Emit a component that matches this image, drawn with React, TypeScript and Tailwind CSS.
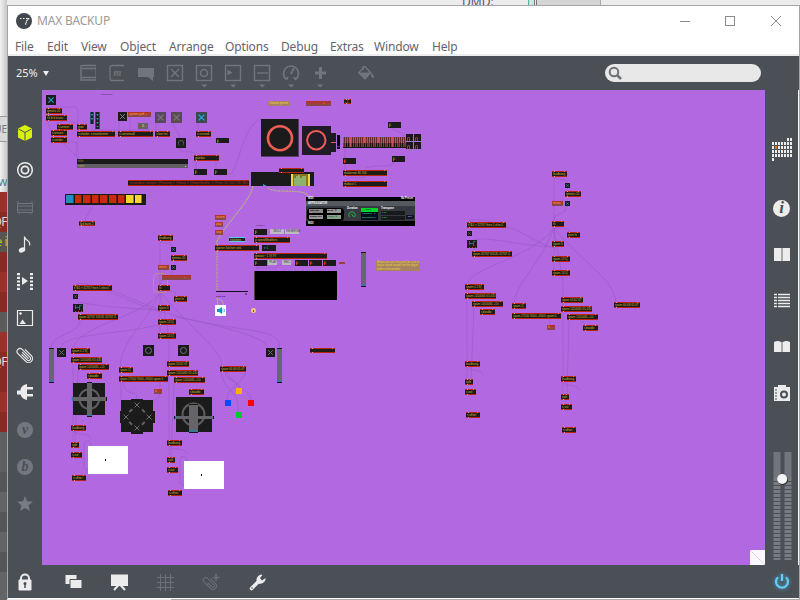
import React from "react";

type Kind = "obj" | "num" | "msg" | "red" | "cyan" | "note" | "bluenum";
type Item = [number, number, number, string, Kind?, number?];

const KIND: Record<Kind, string> = {
  obj: "bg-[#1c1c18] border-y border-[#bd230f] text-[#c9ac38]",
  num: "bg-[#1b1b1b] text-[#c9a838] pl-[4px] leading-[6px]",
  bluenum: "bg-[#1b1b1b] text-[#30a8cf] leading-[6px]",
  msg: "bg-[#bdb9c0] text-[#44404a] text-center leading-[5px]",
  red: "bg-linear-to-b from-[#bd2b18] to-[#7e4b50] text-[#f0a840] leading-[5px]",
  cyan: "bg-[#1b2420] border-y border-[#5cc8f0] text-[#c8c850] leading-[3px]",
  note: "bg-[#a5835f] text-[#f0d23c] leading-[5px]",
};

const ITEMS: Item[] = [
  [46, 108, 16, "qmetro 20"], [46, 115, 21, "t b b b erase"], [57, 124, 16, "r.context"],
  [51, 130, 16, "s.texture"], [51, 137, 16, "s.render"], [77, 124, 10, "gate"],
  [77, 131, 38, "s.shader  s.transformer"], [118, 131, 35, "s cornerwall"], [155, 131, 15, "s low trw"],
  [196, 131, 15, "s unused"], [194, 155, 25, "gatebar"],
  [128, 112, 23, "system grid  ▪", "red", 5], [216, 138, 13, "0.", "num", 5],
  [194, 169, 13, "0.", "num"], [214, 169, 13, "0.", "num"],
  [79, 221, 16, "led.bank 2", "obj", 5],
  [215, 215, 11, "record", "red", 5], [215, 222, 8, "play", "red", 5], [215, 230, 8, "stop", "red", 5],
  [268, 101, 22, "Choose preset", "note", 5], [306, 101, 25, "                     ▪", "red", 5], [344, 99, 7, "▪ 1", "obj", 5],
  [388, 122, 13, "0.", "num"], [392, 156, 13, "0.", "num"], [343, 158, 13, "0.", "num"],
  [343, 170, 44, "makenote 80 300"], [343, 181, 44, "midiout 1"], [279, 168, 25, "", "obj", 5],
  [254, 229, 13, "0.", "num"], [270, 229, 14, "MULT", "msg", 5], [285, 229, 14, "REVERSE", "msg", 5],
  [254, 237, 36, "p.speedModifiers"], [229, 237, 16, "r.kitchen", "cyan", 5], [215, 245, 44, "opener kitchen sink"],
  [262, 245, 14, " ▾ 1.", "bluenum"], [254, 253, 73, "groove~ 1 @ 97"],
  [254, 260, 13, "0.", "num"], [268, 260, 9, "PLAY", "msg", 5], [282, 260, 9, "REC", "msg", 5],
  [295, 260, 13, "0.", "num"], [309, 260, 13, "0.", "num"], [323, 260, 13, "0.", "num"], [339, 262, 6, "", "red", 2],
  [310, 348, 25, "", "obj", 5],
  [162, 275, 29, "                           –", "red", 5],
  [167, 361, 22, "spam 53 62 67"], [220, 366, 26, "spam 66 68 65 67"], [154, 389, 8, "0", "red", 5],
  [189, 389, 15, "r.doodle"],
  [614, 302, 26, "spam 66 68 65 67"], [547, 325, 8, "0", "red", 5], [583, 325, 15, "r.doodle"],
  [561, 297, 22, "spam 53 62 67"],
  ...tree(158, 235, 0), ...tree(552, 171, 1),
  ...outs(71, 425, 0), ...outs(167, 440, 0), ...outs(465, 361, 1), ...outs(561, 376, 1),
  [73, 285, 39, "if $i1 > 32767 then 1 else 0"], [78, 314, 40, "spam 32767 65535 32767 0"],
  [71, 348, 19, "spam 0 2 8|"], [71, 357, 31, "spam 1410065 65 430"], [78, 364, 31, "spam 1410065 +10"], [87, 373, 15, "r.doodle"],
  [119, 367, 14, "spam 2|"], [119, 376, 49, "spam 27000 9000 +9000 spam 0"],
  [167, 370, 31, "spam 1410065 65 430"], [174, 377, 31, "spam 1410065 +10"],
  [467, 222, 39, "if $i1 > 32767 then 1 else 0"], [472, 251, 40, "spam 32767 65535 32767 0"],
  [465, 284, 19, "spam 0 2 8|"], [465, 293, 31, "spam 1410065 65 430"], [472, 301, 31, "spam 1410065 +10"], [480, 309, 15, "r.doodle"],
  [512, 303, 14, "spam 2|"], [512, 313, 49, "spam 27000 9000 +9000 spam 0"],
  [561, 306, 31, "spam 1410065 65 430"], [567, 314, 31, "spam 1410065 +10"],
];

function tree(x: number, y: number, k: number): Item[] {
  return [
    [x, y, 15, "loadbang"], [x + 13, y + 20, 16, "qmetro 20"], [x, y + 30, 11, "menu", "red", 5],
    [x, y + 50, 12, "hi"], [x + (k ? 15 : 16), y + 61, 13, "print hi"], [x, y + 70, 12, "spam 0"],
    [x, y + 84 + k, 18, "spam 13 5|"], [x, y + 98 + k, 18, "spam 14 5|"],
  ];
}
function outs(x: number, y: number, k: number): Item[] {
  return [
    [x, y, 15, "loadbang"], [x, y + 17 + k, 8, "split"], [x, y + 27 + k, 11, "s out"], [x + 1, y + 50 + k, 14, "s offset"],
  ];
}

function Node({ it }: { it: Item }) {
  const [x, y, w, label, kind = "obj", h = 6] = it;
  return (
    <div
      className={"absolute whitespace-pre pl-px font-['Liberation_Sans',sans-serif] text-[3.1px] leading-[4px] tracking-[-0.08px] " + KIND[kind]}
      style={{ left: x - 42, top: y - 90, width: w, height: h }}
    >
      {kind === "num" && <i className="absolute left-px top-[2px] h-[3px] w-px bg-[#e03a18]" />}
      {label}
      {kind === "obj" && (
        <>
          <i className="absolute -top-px left-[2px] h-px w-px bg-[#b9a8a8]" />
          <i className="absolute -bottom-px left-[2px] h-px w-px bg-[#b9a8a8]" />
          <i className="absolute -top-px right-[2px] h-px w-px bg-[#b98a7a]" />
        </>
      )}
    </div>
  );
}

function At({ x, y, w, h, c = "", children }: { x: number; y: number; w: number; h: number; c?: string; children?: React.ReactNode }) {
  return (
    <div className={"absolute " + c} style={{ left: x - 42, top: y - 90, width: w, height: h }}>
      {children}
    </div>
  );
}

function Toggle({ x, y, s, fg = "#6e6e72", bg = "#1b1b1b" }: { x: number; y: number; s: number; fg?: string; bg?: string }) {
  return (
    <svg className="absolute" style={{ left: x - 42, top: y - 90 }} width={s} height={s} viewBox="0 0 10 10">
      <rect width="10" height="10" fill={bg} />
      <path d="M2.4 2.4 7.6 7.6M7.6 2.4 2.4 7.6" stroke={fg} strokeWidth="1.1" />
    </svg>
  );
}

const CORDS = [
  "M49 107H74Q78 107 78 112V160", "M48 121C48 131 60 138 78 158", "M56 123C66 121 70 120 78 124",
  "M66 142H76V156", "M119 121V131M130 117V131M92 124V130H150M156 123V131M198 123V131",
  "M173 122C174 132 179 131 180 138M179 148C179 155 196 149 196 155M196 161V169M216 161V169M229 175C241 168 240 128 261 119",
  "M93 205C91 213 86 214 85 221", "M391 128C397 133 404 130 404 138M345 148V170M394 162C394 169 366 163 365 170M365 176C365 180 347 175 345 181",
  "M160 241V333M160 241C163 245 172 242 173 247M173 252V256M173 270C171 283 160 276 160 285M160 291H171Q176 291 176 296",
  "M160 291C153 314 76 325 73 349M160 291C150 321 122 337 120 367M160 291C166 325 170 329 169 361M160 291C188 327 222 349 222 366",
  "M75 285C86 277 126 302 158 311C190 320 208 324 250 330C276 334 280 339 279 348",
  "M78 302C91 305 119 308 158 310", "M80 320C81 334 51 333 51 349M158 325C112 336 62 333 60 349",
  "M176 317C222 326 266 337 268 348M100 285C137 302 151 306 160 310",
  "M73 354V442M78 370L75 442M121 373V399M169 367V455M174 383L171 457M123 382C126 400 137 386 137 400M160 382V389M160 394C159 402 151 398 150 404",
  "M221 372C225 394 240 389 238 412M225 372C226 382 238 378 239 388M246 372C236 391 228 386 227 400M226 372C240 392 250 389 251 400",
  "M73 431C78 436 90 432 91 439M73 458H81Q84 458 84 452V445Q84 441 88 441Q91 442 91 446M84 457V466Q84 470 91 471",
  "M169 446C174 451 186 447 187 454M169 473H177Q180 473 180 467V460Q180 456 184 456Q187 457 187 461M180 472V481Q180 485 187 486",
  "M554 177V275M554 177C560 181 567 178 567 183M567 188V191M567 206C566 216 554 211 554 221M554 228H564Q569 228 569 232",
  "M554 228C533 257 472 267 467 284M554 228C540 265 517 281 514 303M554 228C559 270 564 270 563 297M554 228C578 259 614 278 616 302",
  "M469 222C470 215 505 224 526 235C540 243 548 247 554 247M474 240C488 236 520 246 554 247",
  "M467 290V379M474 307L471 379M563 303V394M569 320L567 394M550 319V325M580 319C582 324 584 320 585 325",
  "M467 367C472 373 482 368 483 375M563 382C568 388 578 383 579 390",
  "M257 265V270M257 268H276Q277 266 277 265M297 265H277M217 252V292",
];

function Mini({ w, t, c }: { w: string; t: string; c: string }) {
  return <div className={"h-[4px] whitespace-pre pl-px text-[2.5px] leading-[4px] " + w + " " + c}>{t}</div>;
}

function Arpeggiator() {
  return (
    <div className="flex h-full flex-col font-['Liberation_Sans',sans-serif] text-[2.6px] font-bold text-white">
      <div className="flex h-[4px] justify-between px-[2px] leading-[4px]"><span>MIDI</span><span>No Preset</span></div>
      <div className="h-[5px] bg-[#555960] pl-[2px] leading-[5px]">ARPEGGIATOR</div>
      <div className="flex h-[15px] bg-[#363940] pl-px">
        <div className="mt-[2px] grid h-[13px] w-[37px] grid-cols-2 content-start gap-[2px] rounded bg-black px-[2px] pt-px">
          <Mini w="w-[14px]" t="Interval" c="bg-[#888] text-black" />
          <Mini w="w-[14px]" t="BPM   ▾" c="bg-[#999] text-black" />
          <Mini w="w-[14px]" t="Range off" c="bg-[#999] text-black" />
          <Mini w="w-[14px]" t="Latch  ●" c="bg-[#8aa28a] text-[#063]" />
        </div>
        <div className="ml-[3px] w-[13px] pt-px">
          <div className="leading-[3px]">Duration</div>
          <svg width="10" height="8" fill="none"><path d="M2.500 7a3.200 3.200 0 1 1 5 0M4.500 4l2 3" stroke="#27b14a" /></svg>
        </div>
        <div className="ml-px flex flex-col pt-[2px]">
          <Mini w="w-[17px]" t="     Style" c="bg-[#00d32c] text-[#064d15]" />
          <Mini w="w-[17px]" t="Forward   0" c="bg-[#060b21] text-[#25c544]" />
          <Mini w="w-[17px]" t="Backward 0" c="bg-[#060b21] text-[#25c544]" />
        </div>
        <div className="ml-[3px] flex flex-col gap-px pt-px">
          <div className="leading-[3px]">Transpose</div>
          <Mini w="w-[24px]" t="0 st" c="bg-[#17191d] text-[#25c544]" />
          <Mini w="w-[24px]" t="0.00" c="bg-[#17191d] text-[#25c544]" />
        </div>
        <div className="ml-px flex items-end pb-[2px]"><Mini w="w-[8px]" t=" Set" c="bg-[#101328] text-[#aaa]" /></div>
      </div>
      <div className="pl-[2px] leading-[5px]">MIDI</div>
    </div>
  );
}

function Patcher() {
  const cells = ["#2090bd", "#c82b0c", "#c82b0c", "#c82b0c", "#c82b0c", "#c82b0c", "#c82b0c", "#f4d432", "#f4d432"];
  return (
    <main className="relative h-[475px] w-[723px] shrink-0 overflow-hidden bg-[#b168e1]">
      <svg className="absolute left-0 top-0" width="723" height="475" viewBox="42 90 723 475" fill="none">
        <g stroke="#9454c0" strokeOpacity=".6" strokeWidth=".8">
          {CORDS.map((d) => <path key={d} d={d} />)}
        </g>
        <rect x="153.5" y="273.5" width="14" height="19" rx="4" stroke="#bb8e93" />
      </svg>
      <At x={101} y={93} w={14} h={4} c="whitespace-nowrap text-[2px] leading-[4px] text-[#4c2868]">select mode</At>
      <At x={256} y={223} w={12} h={4} c="whitespace-nowrap text-[2.5px] leading-[4px] text-[#4c2868]">speed x</At>
      <At x={216} y={294} w={12} h={4} c="whitespace-nowrap text-[2.5px] leading-[4px] text-[#28163c]">0.00 dB</At>
      <Toggle x={46} y={95} s={10} fg="#2ba3cc" />
      <At x={90} y={112} w={4} h={12} c="bg-[#1b2024] border-x border-[#285566]" />
      <At x={95} y={112} w={5} h={17} c="bg-[#1b2024] border-x border-[#285566]" />
      <svg className="absolute left-[48px] top-[22px]" width="10" height="17">
        <path d="M2 2v8M7.5 2v13" stroke="#2ba3cc" strokeWidth="1.5" strokeDasharray="1.5 2.5" />
      </svg>
      <Toggle x={118} y={112} s={9} fg="#85858a" />
      <Toggle x={155} y={112} s={11} fg="#7d797f" bg="#58485f" />
      <Toggle x={171} y={112} s={11} fg="#7d797f" bg="#594b4e" />
      <Toggle x={196} y={112} s={11} fg="#22aee0" bg="#3d494c" />
      <At x={138} y={123} w={10} h={6} c="flex items-center gap-px bg-[#67616a] pl-[2px] text-[3.5px] leading-[6px] text-[#ddd]"><i className="h-[2px] w-px bg-[#c03020]" />0.</At>
      <At x={176} y={138} w={10} h={10} c="flex items-center justify-center bg-[#1b1b1b]"><i className="size-[6px] rounded-full border border-b-0 border-[#55555a]" /></At>
      <At x={77} y={159} w={111} h={5} c="bg-[#1b1b1b] pl-px text-[3px] leading-[5px] text-[#a89040]">title</At>
      <At x={77} y={164} w={111} h={4} c="flex items-center justify-between bg-[#625e64] pl-px pr-[2px] text-[3px] leading-[4px] text-[#c0a850]">start<i className="size-[1px] bg-[#ccc]" /></At>
      <At x={128} y={180} w={121} h={6} c="border-y border-[#bd230f] bg-[#1c1c18] whitespace-nowrap pl-[2px] font-['Liberation_Sans',sans-serif] text-[3.4px] leading-[4px] text-[#b52a18]">jit.window sample @floating 1 @drop 1 @depthbuffer 1 @rect 50 100 720 880</At>
      <At x={65} y={194} w={81} h={11} c="flex gap-[1px] bg-[#1b1b1b] py-[1px] pl-px">
        {cells.map((c, i) => <i key={i} className="h-[8px] w-[7.6px] border-r border-black/40" style={{ backgroundColor: c }} />)}
      </At>

      <At x={261} y={119} w={38} h={38} c="border-b border-r border-[#5c3970] bg-[#1b1b1b]" />
      <At x={302} y={126} w={29} h={29} c="bg-[#201b26]" />
      <At x={331} y={133} w={5} h={19} c="bg-[#1c1a22] pt-[9px]"><div className="h-px bg-[#ed5d56]" /></At>
      <At x={337} y={135} w={3} h={14} c="bg-black pt-[11px]"><div className="h-px bg-[#6b3375]" /></At>
      <svg className="absolute left-[219px] top-[29px]" width="75" height="40" viewBox="261 119 75 40" fill="none" stroke="#ee5e57">
        <circle cx="280" cy="138.2" r="12" strokeWidth="2.6" /><circle cx="316.3" cy="140.3" r="9.2" strokeWidth="2" />
      </svg>
      <At x={343} y={137} w={63} h={11} c="bg-[#211216]">
        <svg width="63" height="11">
          {Array.from({ length: 32 }, (_, i) => <g key={i}><rect x={i * 2} width={i % 7 === 3 ? 2 : 1.4} height={i % 3 ? 6 : 10} fill="#cc4f53" /><rect x={i * 2} y="6" width="1" height="4" fill="#85383e" /></g>)}
        </svg>
      </At>
      {[[406, 134], [414, 134], [406, 142], [414, 142]].map(([x, y]) => (
        <At key={x + "-" + y} x={x} y={y} w={7} h={7} c="bg-[#1d171c] pl-px pt-[3px]"><div className="h-[4px] w-[3px] rounded-t border border-b-0 border-[#9c3c3e]" /></At>
      ))}

      <At x={251} y={172} w={63} h={14} c="bg-[#1b1b1b]">
        <svg width="63" height="14">
          <rect x="40" y="2" width="19" height="12" fill="#8b7420" />
          <path d="M41 2v12M58 2v12" stroke="#f2d53a" strokeWidth="2" />
          <path d="M43 14V6h2V4h2V3h2v3h2V4h4v10z" fill="#8db36e" />
          <path d="M12 14v-2l2 1 2 1z" fill="#2ba3cc" />
        </svg>
      </At>
      <svg className="absolute left-[172px] top-[90px]" width="140" height="130" viewBox="214 180 140 130" fill="none" stroke="#b6b184" strokeWidth="1.2" strokeDasharray="2 .7">
        <path d="M253 186C250 202 227 222 217 241V292M268 188C274 194 306 188 308 196M217 298L218 305M218 299Q224 300 223 305" />
      </svg>

      <At x={306} y={197} w={109} h={29} c="bg-black"><Arpeggiator /></At>

      <At x={254} y={271} w={83} h={29} c="border-l border-[#444] bg-black" />
      {[[361, 252], [277, 348], [49, 348]].map(([x, y]) => (
        <At key={x} x={x} y={y} w={5} h={35} c="flex items-end border-y border-[#151515] bg-[#6a656c]"><i className="h-[2px] w-[5px] bg-[#347b94]" /></At>
      ))}
      <At x={376} y={261} w={43} h={10} c="bg-[#a5835f] pl-px font-['Liberation_Sans',sans-serif] text-[2.6px] leading-[3.300px] text-[#f0d23c]">Before you start the patch be sure to load a sound sample into the player buffer in the window</At>
      <At x={216} y={291} w={32} h={1} c="bg-[#160920]" /><At x={245} y={293} w={2} h={2} c="bg-[#72428c]" />
      <At x={215} y={305} w={11} h={11} c="bg-white">
        <svg width="11" height="11"><path d="M2 4h2l3-2v7L4 7H2z" fill="#1b91b9" /><path d="M8 3.5v4M9.5 4v3" stroke="#4cb5d5" strokeWidth=".8" /></svg>
      </At>
      <At x={251} y={308} w={5} h={5} c="flex items-center justify-center rounded-full bg-[#f7c77b]"><i className="h-[2px] w-px bg-[#8b4800]" /></At>
      <Toggle x={266} y={348} s={9} /><Toggle x={57} y={348} s={9} />
      <Toggle x={73} y={294} s={5} /><Toggle x={467} y={231} s={5} />
      {[[171, 247], [171, 265], [565, 183], [565, 201]].map(([x, y]) => <Toggle key={x + "-" + y} x={x} y={y} s={5} fg="#2ba3cc" />)}
      {[[73, 304], [467, 240]].map(([x, y]) => (
        <At key={x} x={x} y={y} w={10} h={8} c="bg-[#20191e]"><svg width="10" height="8"><path d="M2.500 1v4M2.500 3.500h4M6.500 6V1.500h2" stroke="#287f9d" strokeWidth=".8" fill="none" /><path d="M2 7.500h1M5 7.500h1M8 7.500h1" stroke="#c33" /></svg></At>
      ))}
      {[143, 178].map((x) => <At key={x} x={x} y={345} w={11} h={11} c="flex items-center justify-center bg-[#1b1b1b]"><i className="size-[7px] rounded-full border border-[#737378]" /></At>)}

      {ITEMS.map((it, i) => <Node key={i} it={it} />)}

      <svg className="absolute left-[28px] top-[291px]" width="148" height="56" viewBox="70 381 148 56">
        <rect x="73" y="383" width="32" height="32" fill="#1b1b1b" />
        <circle cx="89.3" cy="399" r="9.8" fill="none" stroke="#5d5d61" strokeWidth="2" />
        <rect x="87" y="383" width="5" height="33" fill="#656569" /><rect x="72" y="397" width="34" height="4" fill="#656569" />
        <path d="M87 382.5h5M87 416.5h5M106.5 397v4" stroke="#151515" /><path d="M87 415h5M72.5 397v4" stroke="#347b94" strokeWidth="1.5" />
        <path d="M121 400h10v-1h12v1h10v11h2v12h-2v9h-10v2h-12v-2h-10v-9h-1v-12h1z" fill="#1b1b1b" />
        <circle cx="137" cy="417" r="9" fill="none" stroke="#626266" strokeWidth="2" strokeDasharray="4 10.14" strokeDashoffset="-5" />
        {[[137, 405], [137, 428], [126, 417], [149, 417]].map(([x, y]) => <path key={x + "-" + y} d={`M${x - 2.5} ${y - 2.5}l5 5m0-5l-5 5`} stroke="#6b6b6f" />)}
        <rect x="176" y="397" width="36" height="35" fill="#1b1b1b" />
        <circle cx="193.5" cy="414.5" r="11" fill="none" stroke="#5d5d61" strokeWidth="2" />
        <rect x="189" y="405" width="9" height="27" fill="#656569" /><rect x="174" y="416" width="40" height="3" fill="#656569" />
        <path d="M189 404.5h9M189 432.5h9M174.500 416v3M213.500 416v3" stroke="#151515" /><path d="M189 431h9M176 416v3" stroke="#347b94" strokeWidth="2" />
      </svg>
      <At x={88} y={446} w={40} h={28} c="bg-white pl-[17px] pt-[13px]"><div className="h-[2px] w-px bg-black" /></At>
      <At x={184} y={461} w={40} h={28} c="bg-white pl-[17px] pt-[13px]"><div className="h-[2px] w-px bg-black" /></At>
      <At x={236} y={388} w={6} h={6} c="bg-[#ffb000]" /><At x={225} y={400} w={6} h={6} c="bg-[#004dff]" />
      <At x={248} y={400} w={6} h={6} c="bg-[#ff0000]" /><At x={236} y={412} w={6} h={6} c="bg-[#00c833]" />
      <svg className="absolute bottom-0 right-0" width="15" height="15"><rect width="15" height="15" fill="#faf8fc" /><path d="M0 0 15 15" stroke="#d5b2e8" strokeDasharray="1.5 1" /></svg>
    </main>
  );
}

const MENUS: [string, string][] = [
  ["File", "w-[32px]"], ["Edit", "w-[34px]"], ["View", "w-[39px]"], ["Object", "w-[49px]"], ["Arrange", "w-[56px]"],
  ["Options", "w-[56px]"], ["Debug", "w-[49px]"], ["Extras", "w-[44px]"], ["Window", "w-[58px]"], ["Help", "w-[30px]"],
];

function Svg({ w = 18, h = 18, c = "", children }: { w?: number; h?: number; c?: string; children: React.ReactNode }) {
  return <svg width={w} height={h} viewBox={`0 0 ${w} ${h}`} className={"shrink-0 " + c} fill="none" stroke="currentColor">{children}</svg>;
}

function ToolIcons() {
  const arrow = <path d="M6 20.500h6.500l-3.250 3z" fill="currentColor" stroke="none" />;
  return (
    <div className="-ml-px flex gap-[11px] pt-[8px] text-[#71757d]">
      <Svg h={24}><path d="M2 1v16M3 1.500h14M3 4.500h14M3 13.500h14M3 16h14" strokeWidth="1.5" /><path d="M16.500 1v16" strokeOpacity=".55" /></Svg>
      <Svg h={24}><path d="M16 1.500H4Q2 1.500 2 4v10q0 2.500 2 2.500h12" strokeWidth="1.300" /><text x="5.500" y="12" fontSize="10" fontStyle="italic" fontWeight="bold" fontFamily="Liberation Serif" fill="currentColor" stroke="none">m</text></Svg>
      <Svg h={24}><path d="M1 4h16v9h-1v4l-5-4H1z" fill="currentColor" stroke="none" /></Svg>
      <Svg h={24}><rect x="1.500" y="1.500" width="15" height="15" strokeWidth="1.4" /><path d="m5 5 8 8m0-8-8 8" strokeWidth="1.4" /></Svg>
      <Svg h={24}><rect x="1.500" y="1.500" width="15" height="15" strokeWidth="1.4" /><circle cx="9" cy="9" r="3.500" strokeWidth="1.5" />{arrow}</Svg>
      <Svg h={24}><rect x="1.500" y="1.500" width="15" height="15" strokeWidth="1.4" /><path d="m3.500 5.500 5 3-5 3z" fill="currentColor" stroke="none" />{arrow}</Svg>
      <Svg h={24}><rect x="1.500" y="1.500" width="15" height="15" strokeWidth="1.4" /><path d="M4 9h11" strokeWidth="1.3" />{arrow}</Svg>
      <Svg h={24}><path d="M4.500 15.500A7.500 7.500 0 1 1 13.500 15.500L12 13M4.500 15.500L6 13" strokeWidth="1.700" /><path d="m9 10 3-6" strokeWidth="1.800" />{arrow}</Svg>
      <Svg h={24}><path d="M9.500 3v12M4 9h11" strokeWidth="3" />{arrow}</Svg>
      <Svg h={24} c="ml-[17px]"><path d="M1.500 9h12l-5.500 6.500z" fill="currentColor" /><path d="M1.500 9 8 2.500 14 9M6 6V2" strokeWidth="1.400" /><path d="M14.500 9q3.500 3.500 1.500 5-2-1-1.500-5" fill="currentColor" strokeWidth=".5" /></Svg>
    </div>
  );
}

function LeftBar() {
  return (
    <aside className="flex w-[34px] shrink-0 flex-col items-center gap-[19px] bg-[#4b4f56] pt-[34px] text-[#ececec]">
      <Svg><path d="m9 1 7 3.500v9L9 17l-7-3.500v-9z" fill="#d9f20a" stroke="none" /><path d="m2.500 5 6.500 3.500L15.500 5M9 8.500V17" stroke="#4b4f56" /></Svg>
      <Svg><circle cx="9" cy="9" r="7.300" strokeWidth="1.500" /><circle cx="9" cy="9" r="3.600" strokeWidth="1.800" /></Svg>
      <Svg c="text-[#71757d]"><path d="M1.500 5.500h15v9h-15zM1 4h2M15 4h2M1 8h16M1 12h16M3 16h1M14 16h1" /></Svg>
      <Svg><ellipse cx="6" cy="15" rx="3.300" ry="2.400" transform="rotate(-20 6 15)" fill="currentColor" stroke="none" /><path d="M8.500 14.500V1.500c0 4 7 4 5 9" strokeWidth="1.200" /></Svg>
      <Svg><path d="M2.500 1v17M15.500 1v17" strokeWidth="3" strokeDasharray="2.200 1.500" /><path d="m6 5 6 4-6 4z" fill="currentColor" stroke="none" /></Svg>
      <Svg><path d="M1.500 1.500h15v15h-15z" strokeWidth="1.200" /><path d="m3.500 15 3-4.500 3.500 4.500z" fill="currentColor" stroke="none" /><circle cx="4.500" cy="4.500" r="1.300" fill="currentColor" stroke="none" /></Svg>
      <Svg><g transform="rotate(-45 9 9)"><path d="M7 6v8a2 2 0 0 0 4 0V3a3 3 0 0 0-6 0v11a4 4 0 0 0 8 0V5M9 5v9" strokeWidth="1.150" /></g></Svg>
      <Svg><path d="M1 7.500h3.500V6Q6 2 11 1v16Q6 16 4.500 11.500H1zM11 4h6v2.500h-6zM11 11h6v2.500h-6z" fill="currentColor" stroke="none" /></Svg>
      {["v", "b"].map((s) => <div key={s} className="flex h-[18px] w-[17px] items-end justify-center"><div className="size-[16px] rounded-full bg-[#73777f] text-center font-['Liberation_Serif',serif] text-[14px] font-bold italic leading-[15px] text-[#4b4f56]">{s}</div></div>)}
      <Svg c="text-[#787c83]"><path d="m9 2 2 5.300 6 .4-4.500 3.500L14 17l-5-3.100L4 17l1.500-5.800L1 7.700l6-.4z" fill="currentColor" stroke="none" /></Svg>
    </aside>
  );
}

function RightBar() {
  return (
    <aside className="flex w-[33px] shrink-0 flex-col items-center bg-[#4b4f56] pt-[47px] text-[#ececec]">
      <Svg w={22} h={24}>
        {Array.from({ length: 7 }, (_, c) => [0, 1, 2, 3, 4, 5].map((r) => {
          if ((r === 0 && c < 5) || (r === 5 && c > 0)) return null;
          return <rect key={c + "-" + r} x={1 + c * 3} y={1 + r * 4} width="2" height="3" fill={c === 1 && r === 2 ? "#e47916" : "#ececec"} stroke="none" />;
        }))}
      </Svg>
      <div className="mt-[39px] size-[17px] rounded-full bg-[#ececec] text-center font-['Liberation_Serif',serif] text-[17px] font-bold italic leading-[16px] text-[#4b4f56]">i</div>
      <Svg h={14} c="mt-[30px]"><path d="M1 1h7v13H1zM10 1h7v13h-7z" fill="currentColor" stroke="none" /><path d="M9 1v13" stroke="#aaa" strokeWidth="2" /></Svg>
      <Svg h={16} c="mt-[32px]"><path d="M1 1.500h16M1 4.500h16M1 7.500h16M1 10.500h16M1 13.500h16" strokeWidth="1.600" /><path d="M4.500 0v16" stroke="#4b4f56" /></Svg>
      <Svg h={13} c="mt-[31px]"><path d="M1 2q4-2 7 0v10H1zM10 2q3-2 7 0v10h-7z" fill="currentColor" stroke="none" /><path d="M9 2v10" stroke="#aaa" strokeWidth="2" /></Svg>
      <Svg h={18} c="mt-[31px]"><path d="M5 1h8v2h4v14H1V3h4z" fill="currentColor" stroke="none" /><circle cx="11" cy="10.500" r="3" stroke="#4b4f56" strokeWidth="2" /><path d="M2 6h2M2 9h2M2 12h2M2 15h2" stroke="#4b4f56" /></Svg>
      <Svg w={20} h={110} c="mt-[49px]">
        <path d="M1.500 1h7v26h-7zM12.500 1h7v26h-7z" fill="#71757c" stroke="none" />
        <path d="M5 27v82M16 27v82" stroke="#777b82" strokeWidth="7" strokeDasharray="3 1" />
        <circle cx="11" cy="29" r="5" fill="#292c31" stroke="none" /><circle cx="10.200" cy="28" r="5" fill="#f4f4f4" stroke="none" />
      </Svg>
    </aside>
  );
}

function BottomBar() {
  return (
    <footer className="flex h-[33px] items-center gap-[28px] bg-[#4b4f56] pl-[8px] text-[#ececec]">
      <Svg><path d="M3 7h12v10H3z" fill="currentColor" /><path d="M5 8V5.500a4 4 0 0 1 8 0V8" strokeWidth="2" /><circle cx="9" cy="10.500" r="1.500" fill="#4b4f56" stroke="none" /><path d="M9 11v4" stroke="#4b4f56" strokeWidth="1.500" /></Svg>
      <Svg w={20}><path d="M3.500 2h11v9h-11z" fill="currentColor" stroke="none" /><path d="M8 6.500h12v9H8z" fill="currentColor" stroke="#4b4f56" /></Svg>
      <Svg><path d="M1 1.500h17V13H1z" fill="currentColor" stroke="none" /><path d="m9.500 11-5.500 6M9.500 11l5.500 6" strokeWidth="2" /></Svg>
      <Svg c="text-[#6c7077]"><path d="M4.500 1v17M9.500 1v17M14.500 1v17M1 4.500h17M1 9.500h17M1 14.500h17" /></Svg>
      <Svg c="text-[#6c7077]"><g transform="translate(1) rotate(-45 7 10)"><path d="M5.500 8v6a1.500 1.500 0 0 0 3 0V5a2.500 2.500 0 0 0-5 0v9a3.500 3.500 0 0 0 7 0V7" /></g><path d="M14 1v7M10.500 4.500h7" strokeWidth="1.500" /></Svg>
      <Svg><path d="m3.500 15.500 7-7" strokeWidth="3.600" strokeLinecap="round" /><path d="M8.500 8Q8 3 13 1.500l1.500.5-2.500 3 2 2.500 3.500-2.500Q18 10 11.500 11z" fill="currentColor" stroke="none" /><circle cx="4" cy="15" r=".8" fill="#4b4f56" stroke="none" /></Svg>
      <Svg w={22} h={22} c="ml-auto mr-[6px] text-[#66ccf4] drop-shadow-[0_0_2px_#45a6cf]"><path d="M7 6.200a6 6 0 1 0 8 0M11 3v7" strokeWidth="2.200" /></Svg>
    </footer>
  );
}

const ROWS: [string, string, string?][] = [
  ["h-[20px]", "bg-[#9c302b]"], ["h-[20px]", "bg-[#8b2925] text-[#ddd]", "QF"], ["h-[20px]", "bg-[#575655] text-[#d4b927]", "e i"],
  ["h-[20px]", "bg-[#8b2925]"], ["h-[20px]", "bg-[#9c302b]"], ["h-[20px]", "bg-[#8b2925]"], ["h-[20px]", "bg-[#5b5b5b]"],
  ["h-[20px]", "bg-[#9c302b]"], ["h-[20px]", "bg-[#8b2925] text-[#ddd]", "QF"], ["h-[20px]", "bg-[#8b2925]"], ["h-[20px]", "bg-[#9c302b]"], ["h-[20px]", "bg-[#8b2925]"],
  ["h-[40px]", "bg-[#5f6062]"], ["h-[20px]", "bg-[#555658]"], ["h-[20px]", "bg-[#636466]"], ["h-[20px]", "bg-[#555658]"],
  ["h-[20px]", "bg-[#636466]"], ["h-[20px]", "bg-[#555658]"], ["h-[28px]", "bg-[#636466]"],
];

export default function App() {
  return (
    <div className="flex h-[600px] w-[800px] overflow-hidden bg-[#ededed] font-['Noto_Sans',sans-serif]">
      <div className="flex w-[7px] shrink-0 flex-col overflow-hidden bg-linear-to-r from-[#f2f2f2] to-[#c8c8c8] text-[12px]">
        <div className="h-[116px] shrink-0" />
        <div className="flex h-[26px] shrink-0 items-center justify-end border-y border-[#999] bg-[#d9d9d9] text-[10px] text-[#777]">UE</div>
        <div className="h-[50px] shrink-0 pt-[30px] leading-[20px] text-[#617b95]"><span className="-ml-[2px]">w</span></div>
        {ROWS.map(([h, c, t], i) => <div key={i} className={"flex shrink-0 justify-end whitespace-nowrap leading-[20px] tracking-[-0.5px] " + h + " " + c}>{t}</div>)}
      </div>
      <div className="flex min-w-0 grow flex-col">
        <div className="flex h-[5px] shrink-0 overflow-hidden bg-[#ececec] pl-[455px] text-[12px] leading-none text-[#5b5368]">
          <span className="-mt-[4px] w-[66px]">DMD:</span><i className="w-[6px] border-l border-[#49b79a] bg-[#d1e3df]" /><i className="w-[3px] border-x border-[#777]" /><i className="w-[64px] border-r border-[#aaa] bg-[#d5d5d5]" />
        </div>
        <div className="flex h-[594px] flex-col border border-b-0 border-[#a5a5a5] bg-white">
          <header className="flex h-[30px] shrink-0 items-center pl-[8px]">
            <div className="flex size-[16px] items-center justify-center rounded-full bg-[#42464e]"><svg width="12" height="12" fill="none" stroke="#fff"><path d="M2 3.500h2M5 3.500h2M8 3.500h2.500l-2 2.500-1 4" strokeWidth="1.200" strokeDasharray="1.500 .5" /></svg></div>
            <span className="ml-[5px] text-[12px] tracking-[-0.2px] text-[#999]">MAX BACKUP</span>
            <svg className="mb-[2px] ml-auto mr-[16px]" width="104" height="14" fill="none" stroke="#8b8b8b"><path d="M1 8.500h10M92 3l10 10m0-10-10 10" /><rect x="46.500" y="3.500" width="9" height="9" /></svg>
          </header>
          <nav className="flex h-[20px] shrink-0 items-center border-b-2 border-[#eee] pl-[7px] pt-[3px] text-[12px] leading-[15px] tracking-[-0.15px] text-[#64646a]">
            {MENUS.map(([t, w]) => <span key={t} className={"shrink-0 " + w}>{t}</span>)}
          </nav>
          <div className="flex h-[34px] shrink-0 bg-[#4b4f56] pl-[8px]">
            <div className="flex w-[64px] items-center text-[11px] text-[#eee]">25%<span className="ml-[5px] border-x-[3px] border-t-[5px] border-x-transparent border-t-[#eee]" /></div>
            <ToolIcons />
            <div className="ml-auto mr-[38px] mt-[8px] h-[18px] w-[156px] rounded-full bg-[#e8e8e8] pl-[3px] pt-[2px] text-[#6d7178]"><Svg w={15} h={15}><circle cx="6" cy="6" r="4.300" strokeWidth="2" /><path d="m9 9 4 4" strokeWidth="2.500" /></Svg></div>
          </div>
          <div className="flex h-[475px] shrink-0"><LeftBar /><Patcher /><RightBar /></div>
          <BottomBar />
        </div>
        <div className="ml-[164px] h-px shrink-0 bg-[#aaa]" />
      </div>
    </div>
  );
}
